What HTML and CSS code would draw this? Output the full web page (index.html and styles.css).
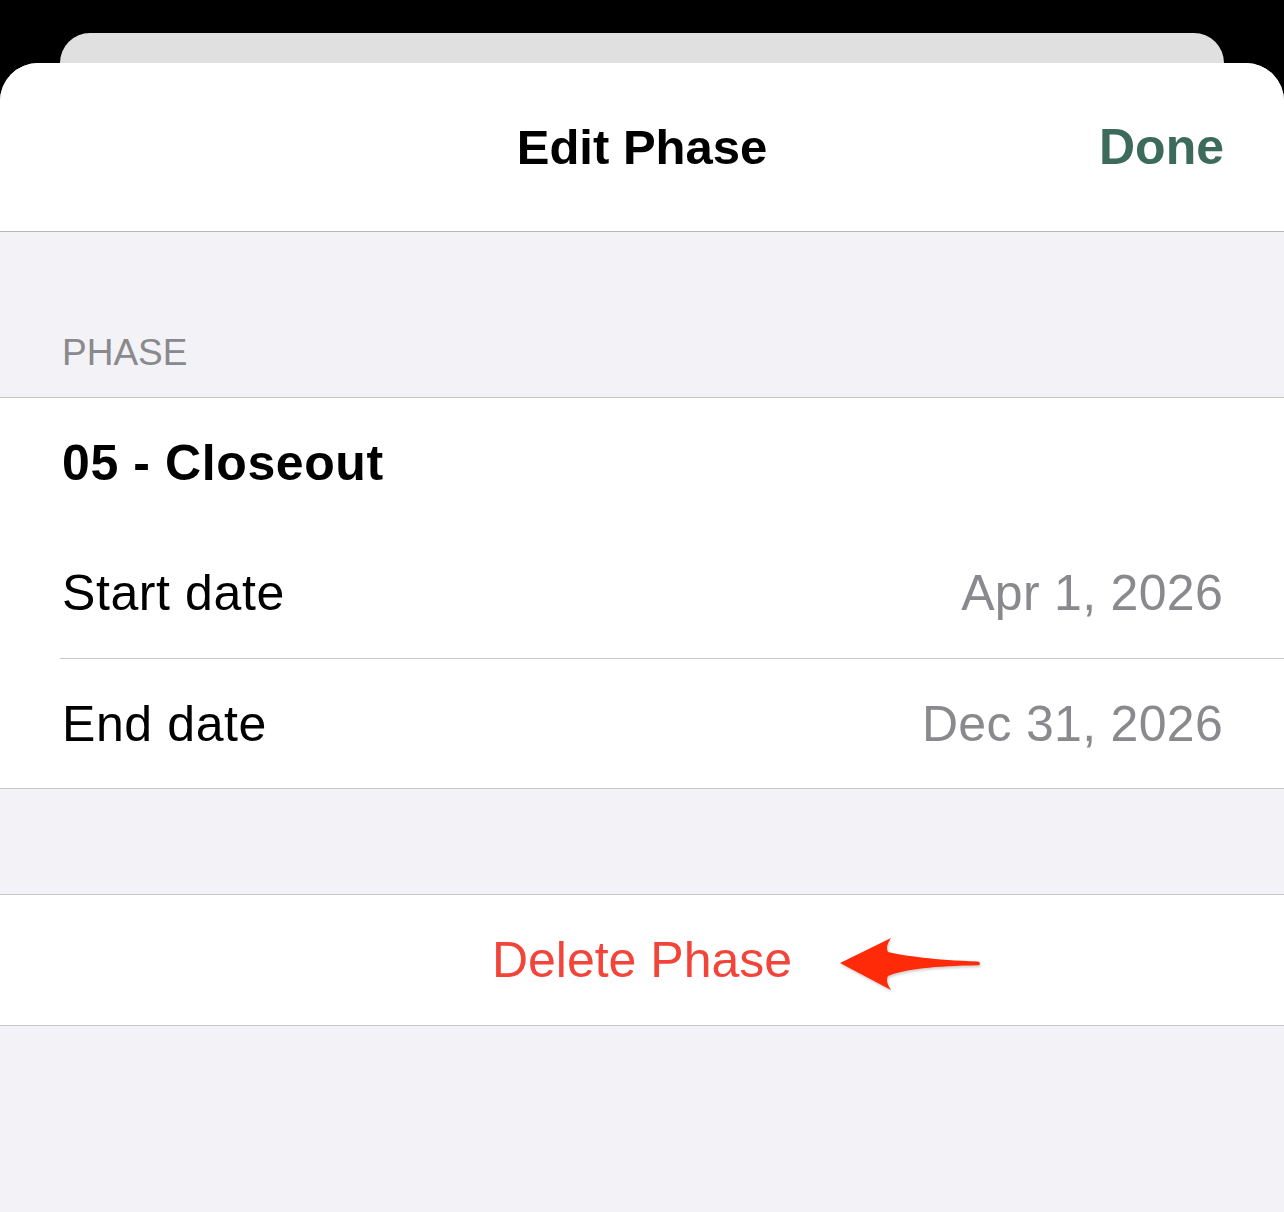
FILE: index.html
```html
<!DOCTYPE html>
<html lang="en">
<head>
  <meta charset="UTF-8" />
  <meta name="viewport" content="width=device-width, initial-scale=1" />
  <title>Edit Phase</title>
  <link rel="stylesheet" href="styles.css">
</head>
<body>
  <div class="screen">
    <!-- card of the presenting screen, peeking out behind the sheet -->
    <div class="back-card"></div>

    <main class="sheet">
      <header class="nav-bar">
        <span class="nav-spacer"></span>
        <h1 class="nav-title">Edit Phase</h1>
        <button type="button" class="nav-done">Done</button>
      </header>

      <section class="form">
        <div class="section-header">PHASE</div>
        <div class="group">
          <div class="cell cell-title">05 - Closeout</div>
          <div class="cell">
            <span class="cell-label">Start date</span>
            <span class="cell-value">Apr 1, 2026</span>
          </div>
          <div class="cell">
            <span class="cell-label">End date</span>
            <span class="cell-value">Dec 31, 2026</span>
          </div>
        </div>

        <div class="group group-action">
          <div class="cell cell-action">
            <button type="button" class="delete-btn">Delete Phase</button>
            <svg class="pointer" width="150" height="60" viewBox="0 0 150 60" aria-hidden="true">
              <path d="M5 29 L56 4 C52 10 51 14 53 18 C70 22 100 26 143 27.5 A1.9 1.9 0 0 1 143 31.3 C100 32 70 35 53 42 C51 46 52 50 56 56 Z" fill="#ff2a08"/>
            </svg>
          </div>
        </div>
      </section>
    </main>
  </div>
</body>
</html>
```

FILE: styles.css
```css
* { box-sizing: border-box; }

html, body {
  margin: 0;
  height: 100%;
}

body {
  background: #000;
  font-family: "Liberation Sans", Arial, sans-serif;
  color: #000;
}

.screen {
  display: flex;
  flex-direction: column;
  height: 1212px;
  padding-top: 33px;
}

.back-card {
  height: 30px;
  margin: 0 60px;
  background: #e0e0e0;
  border-radius: 30px 30px 0 0;
  flex-shrink: 0;
}

.sheet {
  flex: 1;
  display: flex;
  flex-direction: column;
  background: #f2f2f7;
  border-radius: 38px 38px 0 0;
  overflow: hidden;
}

/* navigation bar */
.nav-bar {
  height: 169px;
  flex-shrink: 0;
  display: flex;
  align-items: center;
  justify-content: space-between;
  padding: 0 60px 0 60px;
  background: #fff;
  border-bottom: 1px solid #b9b9bd;
}

.nav-spacer { width: 130px; }

.nav-title {
  margin: 0;
  font-size: 49px;
  font-weight: bold;
  letter-spacing: 0;
}

.nav-done {
  width: 130px;
  text-align: right;
  padding: 0;
  border: none;
  background: none;
  font-family: inherit;
  font-size: 50px;
  font-weight: bold;
  color: #3d6b5b;
}

/* grouped form */
.form {
  display: flex;
  flex-direction: column;
}

.section-header {
  padding: 100px 62px 23px;
  font-size: 37px;
  color: #8a8a8e;
  letter-spacing: 0;
}

.group {
  background: #fff;
  border-top: 1px solid #c6c6c8;
  border-bottom: 1px solid #c6c6c8;
}

.cell {
  height: 130px;
  margin-left: 60px;
  padding: 0 61px 0 2px;
  display: flex;
  align-items: center;
  justify-content: space-between;
  font-size: 50px;
  letter-spacing: 0.6px;
}

.cell + .cell { border-top: 1px solid #c6c6c8; }

.cell-title {
  font-weight: bold;
  border-top: none;
}

.cell-title + .cell { border-top: none; }

.cell-value {
  color: #8a8a8e;
  letter-spacing: 0.3px;
}

.group-action { margin-top: 105px; }

.cell-action {
  position: relative;
  margin-left: 0;
  padding: 0;
  justify-content: center;
  letter-spacing: 0;
}

.delete-btn {
  padding: 0;
  border: none;
  background: none;
  font-family: inherit;
  font-size: 50px;
  color: #f3443a;
}

.pointer {
  position: absolute;
  left: 835px;
  top: 39px;
  filter: drop-shadow(1px 2px 1px rgba(0, 0, 0, 0.18));
}
```
